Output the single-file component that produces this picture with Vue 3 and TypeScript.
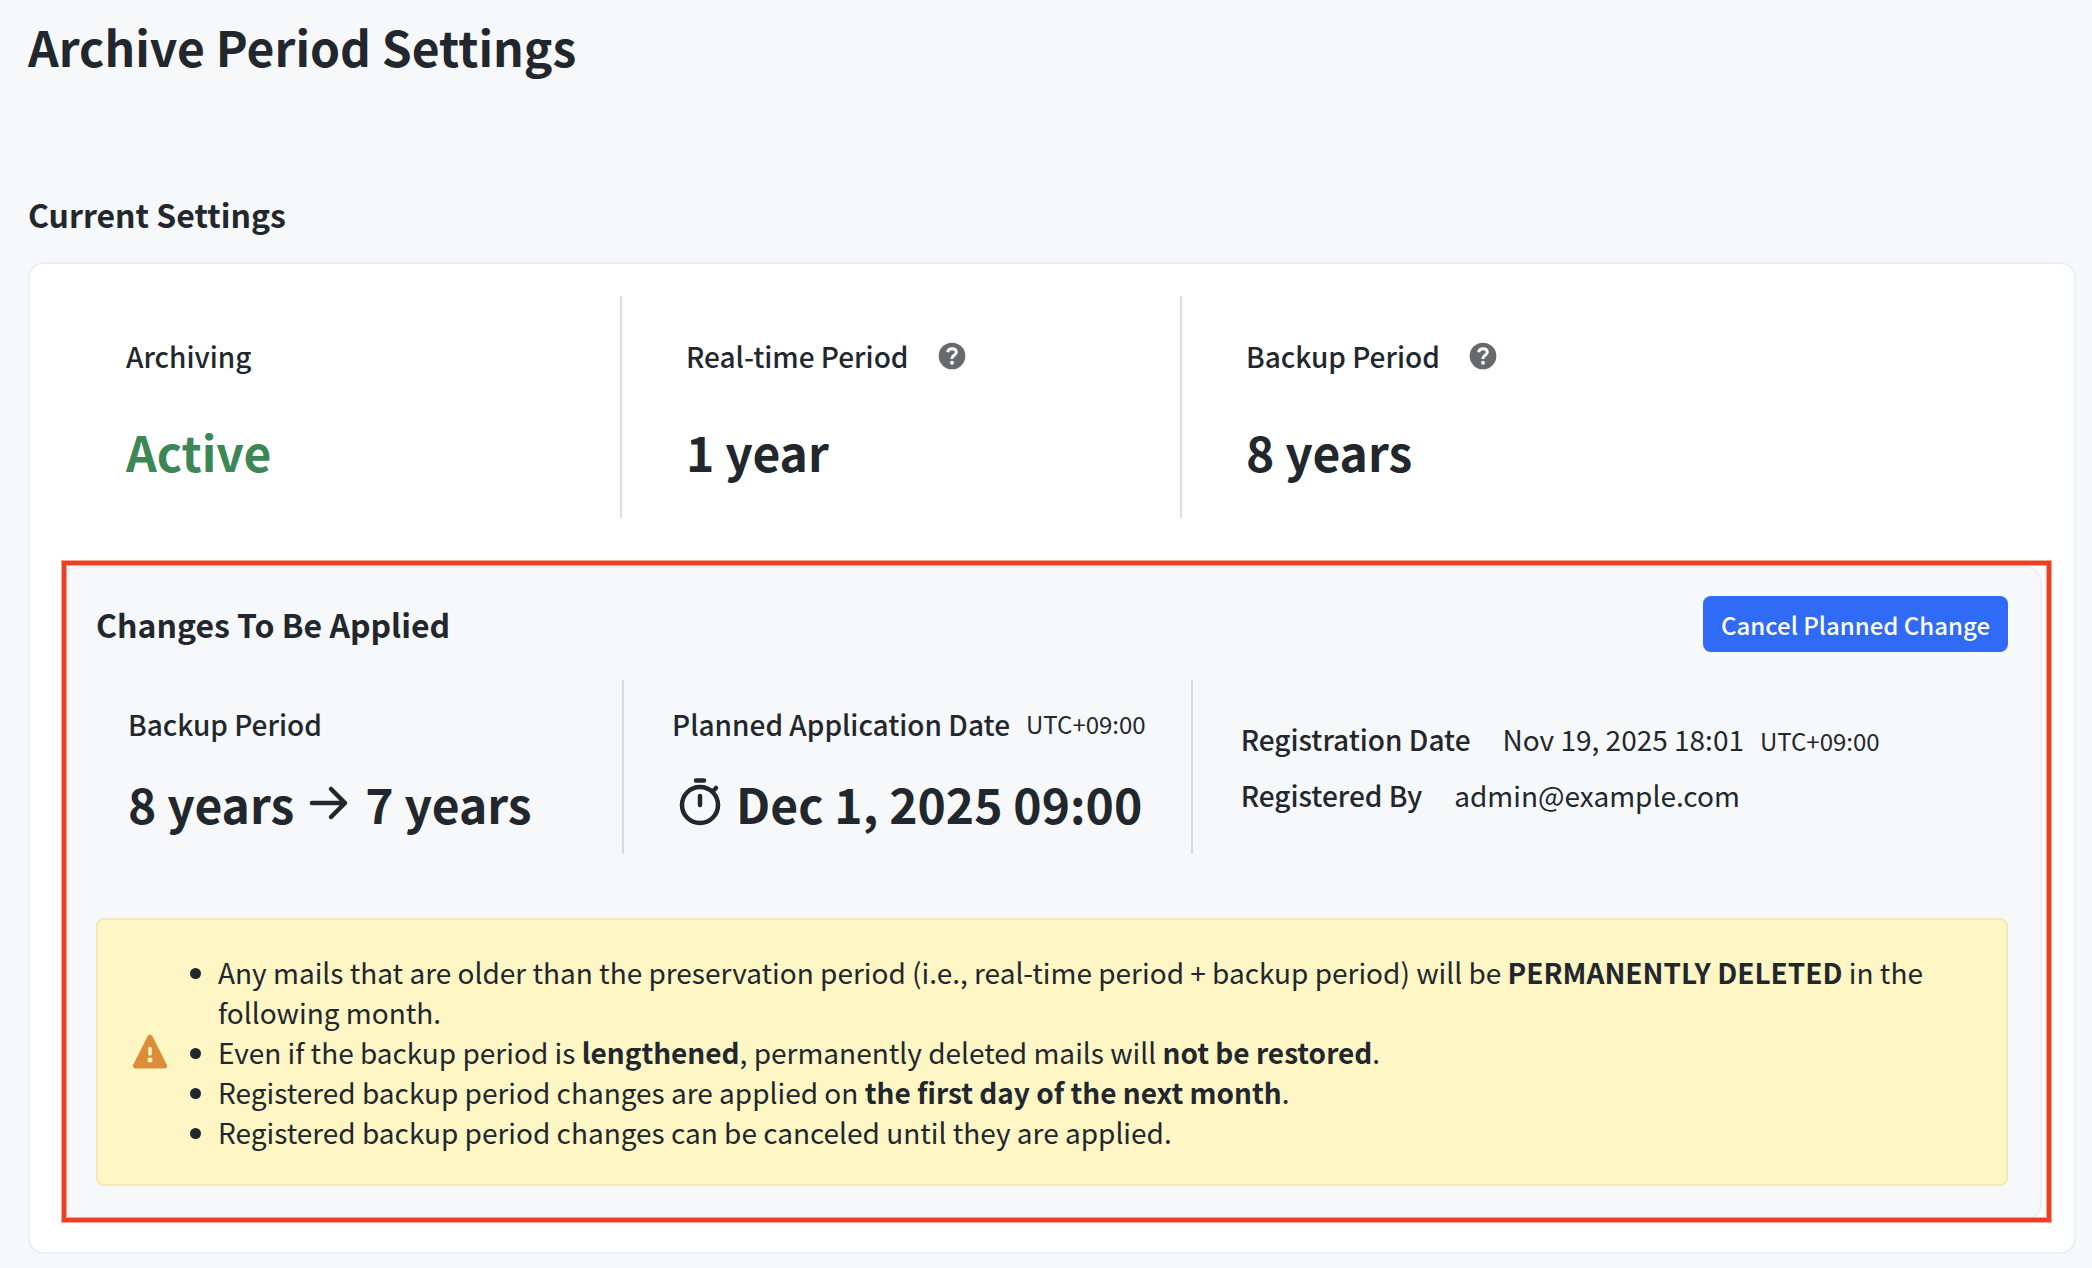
<script setup lang="ts">
interface Metric {
  label: string
  value: string
  help: boolean
  positive?: boolean
}

const metrics: Metric[] = [
  { label: 'Archiving', value: 'Active', help: false, positive: true },
  { label: 'Real-time Period', value: '1 year', help: true },
  { label: 'Backup Period', value: '8 years', help: true },
]

const timezone = 'UTC+09:00'
</script>

<template>
  <main class="page">
    <h1 class="page-title">Archive Period Settings</h1>
    <h2 class="section-title">Current Settings</h2>

    <section class="card">
      <div class="metrics">
        <div v-for="metric in metrics" :key="metric.label" class="metric">
          <div class="label">
            <span>{{ metric.label }}</span>
            <button v-if="metric.help" class="help" type="button" :aria-label="`About ${metric.label}`">
              <svg viewBox="0 0 84 84" aria-hidden="true">
                <circle cx="42" cy="42" r="40" fill="currentColor" />
                <path
                  d="M29 31c1-7 5-11 13-11s13 4 13 11c0 8-13 9-13 17v3"
                  fill="none"
                  stroke="#fff"
                  stroke-width="9"
                />
                <circle cx="42" cy="62" r="6" fill="#fff" />
              </svg>
            </button>
          </div>
          <div class="value" :class="{ positive: metric.positive }">{{ metric.value }}</div>
        </div>
      </div>

      <section class="changes">
        <header class="changes-header">
          <h3 class="section-title">Changes To Be Applied</h3>
          <button class="primary" type="button">Cancel Planned Change</button>
        </header>

        <div class="details">
          <div class="detail detail-period">
            <div class="label">Backup Period</div>
            <div class="value">
              <span>8 years</span>
              <svg class="arrow" viewBox="0 0 40 40" aria-hidden="true">
                <path
                  d="M3 20h33M22 6l14 14-14 14"
                  fill="none"
                  stroke="currentColor"
                  stroke-width="4.500"
                  stroke-linecap="round"
                  stroke-linejoin="round"
                />
              </svg>
              <span>7 years</span>
            </div>
          </div>

          <div class="detail">
            <div class="label planned">
              <span>Planned Application Date</span>
              <span class="timezone">{{ timezone }}</span>
            </div>
            <div class="value">
              <svg
                class="stopwatch"
                viewBox="0 0 56 56"
                fill="none"
                stroke="currentColor"
                stroke-width="4.500"
                stroke-linecap="round"
                aria-hidden="true"
              >
                <circle cx="28" cy="30" r="18" />
                <path d="M24 5.500h8M28 21v9M41 16l3-3" />
              </svg>
              <span>Dec 1, 2025 09:00</span>
            </div>
          </div>

          <dl class="detail registration">
            <div class="entry">
              <dt>Registration Date</dt>
              <dd>Nov 19, 2025 18:01<span class="timezone">{{ timezone }}</span></dd>
            </div>
            <div class="entry">
              <dt>Registered By</dt>
              <dd>admin@example.com</dd>
            </div>
          </dl>
        </div>

        <div class="notice" role="note">
          <svg class="warning" viewBox="0 0 36 36" aria-hidden="true">
            <path fill="#dd8d38" d="M15.500 2.300c1.100-2 3.900-2 5 0l14.200 28.200c1 2-.3 4-2.500 4H3.800c-2.200 0-3.500-2-2.500-4z" />
            <path stroke="#fef6c4" stroke-width="3.500" stroke-linecap="round" d="M18 14.500v5.500" />
            <circle cx="18" cy="26" r="2.500" fill="#fef6c4" />
          </svg>
          <ul>
            <li>
              Any mails that are older than the preservation period (i.e., real-time period + backup period) will be
              <strong>PERMANENTLY DELETED</strong> in the following month.
            </li>
            <li>
              Even if the backup period is <strong>lengthened</strong>, permanently deleted mails will
              <strong>not be restored</strong>.
            </li>
            <li>Registered backup period changes are applied on <strong>the first day of the next month</strong>.</li>
            <li>Registered backup period changes can be canceled until they are applied.</li>
          </ul>
        </div>
      </section>
    </section>
  </main>
</template>

<style>
body {
  margin: 0;
  background: #f7f8fa;
}
</style>

<style scoped>
.page {
  box-sizing: border-box;
  padding: 10px 16px 14px 28px;
  color: #22272e;
  font-family: "Noto Sans CJK JP", "Noto Sans", sans-serif;
  font-size: 28px;
  line-height: 40px;
}

h1,
h2,
h3,
dl,
dd,
ul {
  margin: 0;
  padding: 0;
}

.page-title {
  font-size: 48px;
  font-weight: 700;
  line-height: 72px;
}

.section-title {
  font-size: 32px;
  font-weight: 700;
  line-height: 48px;
}

h2.section-title {
  margin: 108px 0 24px;
}

.card {
  padding: 32px;
  border: 2px solid #eeeff2;
  border-radius: 16px;
  background: #fff;
}

.metrics {
  display: flex;
  margin-bottom: 48px;
}

.metric {
  box-sizing: border-box;
  flex: 0 1 560px;
  padding: 32px 0 32px 64px;
  border-right: 2px solid #dddee0;
}

.metric:last-child {
  border-right: 0;
}

.label {
  display: flex;
  align-items: center;
  gap: 29px;
  height: 56px;
  font-weight: 500;
}

.metric .label {
  margin-bottom: 32px;
}

.value {
  display: flex;
  align-items: center;
  font-size: 48px;
  font-weight: 700;
  line-height: 70px;
  white-space: nowrap;
}

.positive {
  color: #3d8757;
}

.help {
  width: 28px;
  height: 28px;
  padding: 0;
  border: 0;
  background: none;
  color: #67696d;
}

.help svg {
  display: block;
}

.changes {
  position: relative;
  padding: 28px 32px 32px;
  border: 2px solid #eeeff2;
  border-radius: 16px;
  background: #f7f8fa;
}

/* Highlight frame drawn over the panel's edge. */
.changes::after {
  content: "";
  position: absolute;
  inset: -7px -11px -4px -2px;
  border: 4px solid #ea4025;
  box-shadow: 0 0 0 1px #f5a292, inset 0 0 0 1px #f5a292;
  pointer-events: none;
}

.changes-header {
  display: flex;
  align-items: center;
  justify-content: space-between;
  margin-bottom: 28px;
}

.primary {
  height: 56px;
  padding: 0 18px;
  border: 0;
  border-radius: 8px;
  background: #2f6bf6;
  color: #fff;
  font-family: inherit;
  font-size: 24px;
  font-weight: 500;
}

.details {
  display: flex;
  margin-bottom: 64px;
}

.detail {
  box-sizing: border-box;
  padding: 16px 45px 16px 48px;
  border-right: 2px solid #d9dadd;
}

.detail-period {
  flex: 0 1 528px;
  padding: 16px 0 16px 32px;
}

.detail .label {
  margin-bottom: 16px;
}

.label.planned {
  gap: 16px;
}

.arrow {
  width: 40px;
  height: 40px;
  margin: 0 16px 0 15px;
}

.stopwatch {
  width: 56px;
  height: 56px;
  margin-right: 8px;
}

.timezone {
  font-size: 24px;
  font-weight: 400;
  line-height: 28px;
}

.registration {
  display: flex;
  flex-direction: column;
  justify-content: center;
  border-right: 0;
}

.entry {
  display: flex;
  align-items: baseline;
  gap: 32px;
  line-height: 56px;
}

.entry dt {
  font-weight: 500;
}

.entry .timezone {
  margin-left: 16px;
}

.notice {
  display: flex;
  align-items: center;
  padding: 32px;
  border: 2px solid #f1e9b8;
  border-radius: 8px;
  background: #fef6c4;
}

.warning {
  flex: none;
  width: 36px;
  height: 36px;
  margin: 0 50px 0 2px;
}
</style>
